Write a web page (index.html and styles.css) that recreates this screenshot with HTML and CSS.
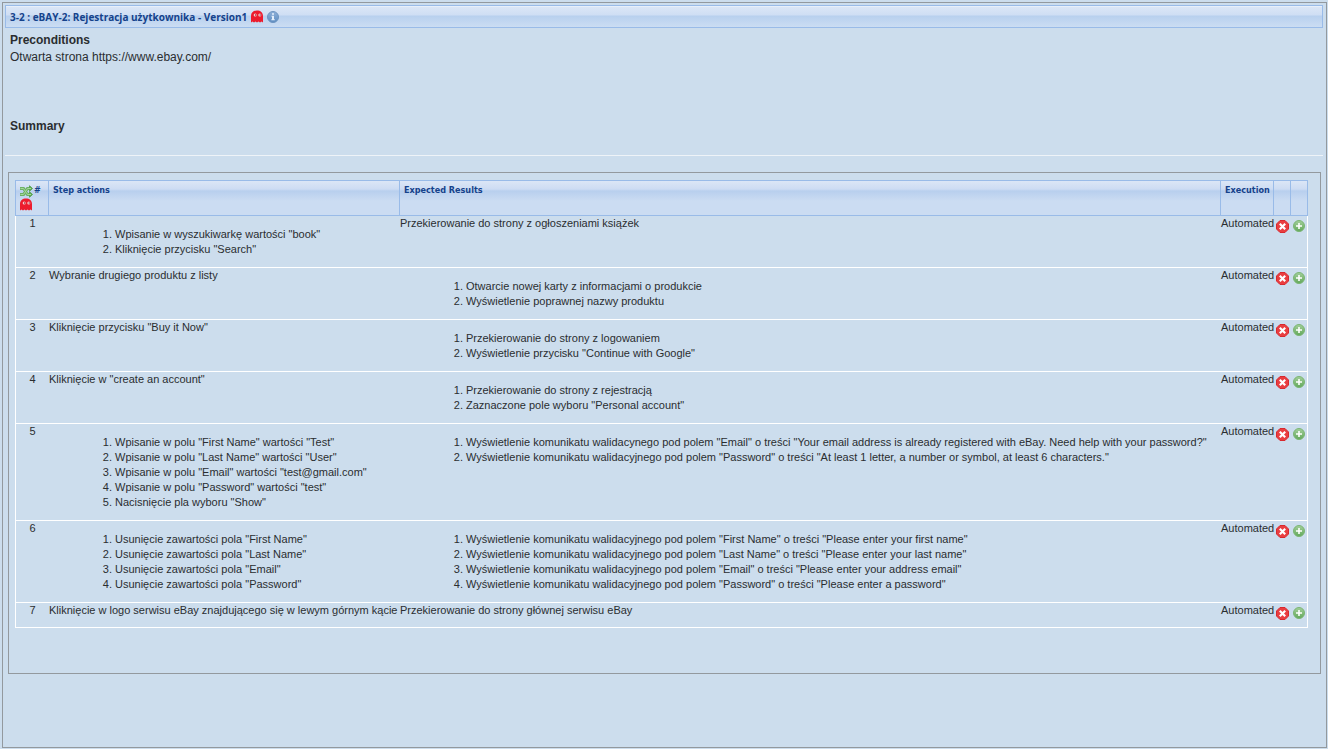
FILE: index.html
```html
<!DOCTYPE html>
<html lang="pl">
<head>
<meta charset="utf-8">
<title>eBAY-2: Rejestracja użytkownika</title>
<link rel="stylesheet" href="styles.css">
</head>
<body>
<svg class="defs" aria-hidden="true">
  <linearGradient id="green" x1="0" y1="0" x2="0" y2="1"><stop offset="0" stop-color="#a3cf9b"/><stop offset="1" stop-color="#62a85a"/></linearGradient>
  <linearGradient id="blue" x1="0" y1="0" x2="0" y2="1"><stop offset="0" stop-color="#8fb0d8"/><stop offset="1" stop-color="#5e8dc2"/></linearGradient>
  <symbol id="ghost" viewBox="0 0 12 13">
    <path fill="#ec1c2e" d="M0 12.500V6C0 2.500 2.500.5 6 .5S12 2.500 12 6v6.500l-1.500-1-1.500 1-1.500-1-1.500 1-1.500-1-1.500 1-1.500-1z"/>
    <circle cx="4.200" cy="5" r="1.500" fill="#ffd0d0"/><circle cx="8.800" cy="5" r="1.500" fill="#ffd0d0"/>
    <circle cx="4.600" cy="5" r=".7" fill="#8b2332"/><circle cx="9.200" cy="5" r=".7" fill="#8b2332"/>
  </symbol>
  <symbol id="info" viewBox="0 0 12 12">
    <circle cx="6" cy="6" r="5.500" fill="url(#blue)" stroke="#6d94c0"/>
    <path fill="#e4eefa" d="M5 2.200h2v1.600H5zM4.500 4.700H7v3.600h.8v1H4.300v-1H5V5.700h-.5z"/>
  </symbol>
  <symbol id="shuffle" viewBox="0 0 13 13">
    <g fill="none" stroke="#6cb065" stroke-width="3"><path d="M0 3.500h3.500l4 6H10M0 9.500h3.500l4-6H10"/></g>
    <path fill="#5aaa55" stroke="#5ba455" d="M9.500.8l3 2.700-3 2.700zM9.500 6.800l3 2.700-3 2.700z"/>
    <g fill="none" stroke="#a5d89b"><path d="M.5 3.500h3l4 6H11M.5 9.500h3l4-6H11"/></g>
  </symbol>
  <symbol id="delete" viewBox="0 0 13 13">
    <path fill="#e93e40" stroke="#d8292e" d="M4 .5h5L12.500 4v5L9 12.500H4L.5 9V4z"/>
    <path fill="none" stroke="#fff" stroke-width="2.200" d="M3.800 3.800l5.400 5.400M9.200 3.800L3.800 9.200"/>
  </symbol>
  <symbol id="add" viewBox="0 0 12 12">
    <circle cx="6" cy="6" r="5.500" fill="url(#green)" stroke="#7bb573"/>
    <path fill="none" stroke="#fff" stroke-width="1.600" d="M6 3v6M3 6h6"/>
  </symbol>
</svg>
<main class="panel">
  <h1 class="title">3-2 : eBAY-2: Rejestracja użytkownika - Version1
    <button class="icon-button" aria-label="Ghost"><svg class="ghost"><use href="#ghost"/></svg></button>
    <button class="icon-button" aria-label="Info"><svg class="round"><use href="#info"/></svg></button>
  </h1>
  <section class="preconditions">
    <h2>Preconditions</h2>
    <p>Otwarta strona https://www.ebay.com/</p>
  </section>
  <section class="summary"><h2>Summary</h2></section>
  <section class="steps-box">
    <table class="steps">
      <colgroup><col class="col-number"><col class="col-actions"><col><col class="col-execution"><col class="col-icon"><col class="col-icon"></colgroup>
      <thead>
        <tr>
          <th class="number-head"><div class="head-line"><button class="icon-button" aria-label="Reorder"><svg class="square"><use href="#shuffle"/></svg></button>#</div><button class="icon-button" aria-label="Ghost steps"><svg class="ghost"><use href="#ghost"/></svg></button></th>
          <th>Step actions</th><th>Expected Results</th><th>Execution</th><th></th><th></th>
        </tr>
      </thead>
      <tbody>
        <tr>
          <td>1</td>
          <td><ol><li>Wpisanie w wyszukiwarkę wartości "book"</li><li>Kliknięcie przycisku "Search"</li></ol></td>
          <td>Przekierowanie do strony z ogłoszeniami książek</td>
          <td>Automated</td>
          <td class="action"><button class="icon-button" aria-label="Delete step 1"><svg class="square"><use href="#delete"/></svg></button></td>
          <td class="action"><button class="icon-button" aria-label="Add after step 1"><svg class="round"><use href="#add"/></svg></button></td>
        </tr>
        <tr>
          <td>2</td>
          <td>Wybranie drugiego produktu z listy</td>
          <td><ol><li>Otwarcie nowej karty z informacjami o produkcie</li><li>Wyświetlenie poprawnej nazwy produktu</li></ol></td>
          <td>Automated</td>
          <td class="action"><button class="icon-button" aria-label="Delete step 2"><svg class="square"><use href="#delete"/></svg></button></td>
          <td class="action"><button class="icon-button" aria-label="Add after step 2"><svg class="round"><use href="#add"/></svg></button></td>
        </tr>
        <tr>
          <td>3</td>
          <td>Kliknięcie przycisku "Buy it Now"</td>
          <td><ol><li>Przekierowanie do strony z logowaniem</li><li>Wyświetlenie przycisku "Continue with Google"</li></ol></td>
          <td>Automated</td>
          <td class="action"><button class="icon-button" aria-label="Delete step 3"><svg class="square"><use href="#delete"/></svg></button></td>
          <td class="action"><button class="icon-button" aria-label="Add after step 3"><svg class="round"><use href="#add"/></svg></button></td>
        </tr>
        <tr>
          <td>4</td>
          <td>Kliknięcie w "create an account"</td>
          <td><ol><li>Przekierowanie do strony z rejestracją</li><li>Zaznaczone pole wyboru "Personal account"</li></ol></td>
          <td>Automated</td>
          <td class="action"><button class="icon-button" aria-label="Delete step 4"><svg class="square"><use href="#delete"/></svg></button></td>
          <td class="action"><button class="icon-button" aria-label="Add after step 4"><svg class="round"><use href="#add"/></svg></button></td>
        </tr>
        <tr>
          <td>5</td>
          <td><ol><li>Wpisanie w polu "First Name" wartości "Test"</li><li>Wpisanie w polu "Last Name" wartości "User"</li><li>Wpisanie w polu "Email" wartości "test@gmail.com"</li><li>Wpisanie w polu "Password" wartości "test"</li><li>Nacisnięcie pla wyboru "Show"</li></ol></td>
          <td><ol><li>Wyświetlenie komunikatu walidacynego pod polem "Email" o treści "Your email address is already registered with eBay. Need help with your password?"</li><li>Wyświetlenie komunikatu walidacyjnego pod polem "Password" o treści "At least 1 letter, a number or symbol, at least 6 characters."</li></ol></td>
          <td>Automated</td>
          <td class="action"><button class="icon-button" aria-label="Delete step 5"><svg class="square"><use href="#delete"/></svg></button></td>
          <td class="action"><button class="icon-button" aria-label="Add after step 5"><svg class="round"><use href="#add"/></svg></button></td>
        </tr>
        <tr>
          <td>6</td>
          <td><ol><li>Usunięcie zawartości pola "First Name"</li><li>Usunięcie zawartości pola "Last Name"</li><li>Usunięcie zawartości pola "Email"</li><li>Usunięcie zawartości pola "Password"</li></ol></td>
          <td><ol><li>Wyświetlenie komunikatu walidacyjnego pod polem "First Name" o treści "Please enter your first name"</li><li>Wyświetlenie komunikatu walidacyjnego pod polem "Last Name" o treści "Please enter your last name"</li><li>Wyświetlenie komunikatu walidacyjnego pod polem "Email" o treści "Please enter your address email"</li><li>Wyświetlenie komunikatu walidacyjnego pod polem "Password" o treści "Please enter a password"</li></ol></td>
          <td>Automated</td>
          <td class="action"><button class="icon-button" aria-label="Delete step 6"><svg class="square"><use href="#delete"/></svg></button></td>
          <td class="action"><button class="icon-button" aria-label="Add after step 6"><svg class="round"><use href="#add"/></svg></button></td>
        </tr>
        <tr>
          <td>7</td>
          <td>Kliknięcie w logo serwisu eBay znajdującego się w lewym górnym kącie</td>
          <td>Przekierowanie do strony głównej serwisu eBay</td>
          <td>Automated</td>
          <td class="action"><button class="icon-button" aria-label="Delete step 7"><svg class="square"><use href="#delete"/></svg></button></td>
          <td class="action"><button class="icon-button" aria-label="Add after step 7"><svg class="round"><use href="#add"/></svg></button></td>
        </tr>
      </tbody>
    </table>
  </section>
</main>
</body>
</html>
```
FILE: styles.css
```css
* { box-sizing: border-box; }

body {
  display: flex;
  min-height: 100vh;
  margin: 0;
  padding: 2px 1px 1px 2px;
  background: #ccdded;
  color: #2a2d30;
  font: 11px/15px "Liberation Sans", Arial, sans-serif;
}

.defs {
  position: absolute;
  width: 0;
  height: 0;
}

.panel {
  flex: 1;
  min-width: 0;
  padding: 2px 3px;
  padding-left: 2px;
  border: 1px solid #93999e;
}

.title {
  display: flex;
  align-items: center;
  gap: 4px;
  height: 23px;
  margin: 0;
  padding: 0 4px;
  border: 1px solid #99bbe8;
  background: linear-gradient(#f4f8fd 0, #dbe6f6 1px, #cfdef4 9px, #b8d0ee 10px, #cbddf3 100%);
  color: #15428b;
  font: bold 10px/14px "Open Sans", "Noto Sans", sans-serif;
}

h2 {
  margin: 0;
  font-size: 12px;
  line-height: 17px;
}

.preconditions {
  padding: 4px 5px 0;
  font-size: 12px;
  line-height: 17px;
}

.preconditions p { margin: 0; }

.summary {
  padding: 52px 5px 20px;
  border-bottom: 1px solid #eef3f8;
}

.steps-box {
  margin: 16px 2px 0 3px;
  padding: 7px 12px 45px 6px;
  border: 1px solid #93999e;
}

.steps {
  width: 100%;
  border-collapse: separate;
  border-spacing: 0;
  table-layout: fixed;
}

.col-number { width: 33px; }
.col-actions { width: 351px; }
.col-execution { width: 53px; }
.col-icon { width: 17px; }
.col-icon:last-child { width: 18px; }

th {
  height: 36px;
  padding: 2px 0 0 4px;
  border: solid #99bbe8;
  border-width: 1px 0 1px 1px;
  background: linear-gradient(#dbe6f6 0, #cddcf3 8px, #b8cfee 10px, #cbdcf2 20px, #cbdcf2 100%);
  color: #15428b;
  font: bold 9px/14px "DejaVu Sans Condensed", "DejaVu Sans", sans-serif;
  text-align: left;
  vertical-align: top;
}

th:last-child { border-right-width: 1px; }

.head-line {
  display: flex;
  gap: 1px;
  height: 15px;
}

.head-line .icon-button { padding-top: 1px; }

td {
  height: 25px;
  padding: 0;
  border-bottom: 1px solid #fff;
  vertical-align: top;
}

td:first-child {
  padding-left: 1px;
  border-left: 1px solid #fff;
  text-align: center;
}

td:last-child { border-right: 1px solid #fff; }

td:nth-child(2), td:nth-child(3), td:nth-child(4) { padding-left: 1px; }

ol {
  margin: 11px 0 10px;
  padding-left: 66px;
}

.icon-button {
  display: block;
  padding: 0;
  border: 0;
  background: none;
}

.icon-button svg { display: block; }
.ghost { width: 12px; height: 13px; }
.round { width: 12px; height: 12px; }
.square { width: 13px; height: 13px; }
.action { padding: 4px 0 0 3px; }
```
